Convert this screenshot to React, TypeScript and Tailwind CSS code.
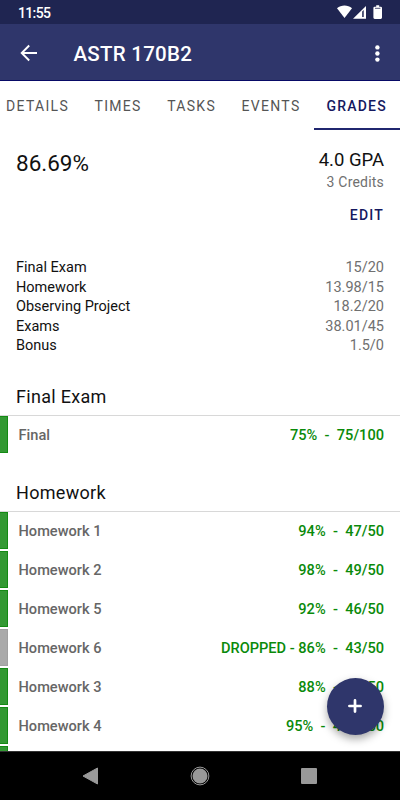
import clsx from "clsx"

type Grade = { name: string; percent: string; score: string; dropped?: boolean }

const tabs = ["DETAILS", "TIMES", "TASKS", "EVENTS"]

const summary = [
    ["Final Exam", "15/20"],
    ["Homework", "13.98/15"],
    ["Observing Project", "18.2/20"],
    ["Exams", "38.01/45"],
    ["Bonus", "1.5/0"],
]

const finals: Grade[] = [{ name: "Final", percent: "75%", score: "75/100" }]

const homework: Grade[] = [
    { name: "Homework 1", percent: "94%", score: "47/50" },
    { name: "Homework 2", percent: "98%", score: "49/50" },
    { name: "Homework 5", percent: "92%", score: "46/50" },
    { name: "Homework 6", percent: "86%", score: "43/50", dropped: true },
    { name: "Homework 3", percent: "88%", score: "44/50" },
    { name: "Homework 4", percent: "95%", score: "47.5/50" },
]

const StatusBar = () => (
    <div className="flex h-6 shrink-0 items-center justify-between bg-[#1f2551] pl-[18px] pr-[17px]">
        <span className="pt-[1px] text-[14px] font-medium leading-5 tracking-[-0.65px]">11:55</span>
        <svg width="47" height="24" viewBox="0 0 47 24" fill="white">
            <path d="M1 8.2C5.2 4.7 11.8 4.7 16 8.2L8.5 18Z" />
            <path fillRule="evenodd" d="M17 18.7L30 6v12.7ZM26.2 11.5v5.6h1.5v-7Z" />
            <path d="M38.7 6.7h1.5V5.3h3v1.4h1.5q1.3 0 1.3 1.3v9.6q0 1.3-1.3 1.3h-6q-1.3 0-1.3-1.3V8q0-1.3 1.3-1.3Z" />
            <path d="M39 8.3h5.4" stroke="#1f2551" strokeWidth=".8" />
        </svg>
    </div>
)

const Header = () => (
    <header className="flex h-[57px] shrink-0 items-center border-b border-[#080a66] bg-[#2f366b] pl-4 pr-[11px]">
        <svg width="24" height="24" viewBox="0 0 24 24" fill="none" stroke="white" strokeWidth="1.9" className="mt-[2px]">
            <path d="M21 12H6M13.2 4.5L5.7 12l7.5 7.5" />
        </svg>
        <h1 className="ml-[33.5px] grow pt-[4px] text-[20.5px] font-medium leading-6 tracking-[0.25px]">ASTR 170B2</h1>
        <svg width="24" height="24" viewBox="0 0 24 24" fill="white" className="mt-[1px]">
            <circle cx="12.4" cy="6.4" r="2.2" />
            <circle cx="12.4" cy="12.5" r="2.2" />
            <circle cx="12.4" cy="18.6" r="2.2" />
        </svg>
    </header>
)

const Tabs = () => (
    <nav className="flex h-[49px] shrink-0 text-[14px] leading-[51px] tracking-[1.3px] text-[#555]">
        <div className="flex gap-[25.5px] pl-[6px]">
            {tabs.map((tab) => (
                <span key={tab}>{tab}</span>
            ))}
        </div>
        <span className="ml-auto w-[86px] border-b-2 border-[#20266f] pl-[12.5px] font-medium tracking-[1.2px] text-[#15195f]">GRADES</span>
    </nav>
)

const Section = ({ title, grades }: { title: string; grades: Grade[] }) => (
    <section>
        <h2 className="h-[38px] border-b border-[#d8d8d8] pl-4 text-[18px] leading-[37px] tracking-[0.3px]">{title}</h2>
        {grades.map((g) => (
            <div key={g.name} className="mb-[2px] flex h-[37px] items-start pr-4 text-[14.6px] font-medium leading-5">
                <span
                    className={clsx(
                        "h-[37px] w-2 border-y border-r",
                        g.dropped ? "border-[#a0a0a0] bg-[#aaa]" : "border-[#148a14] bg-[#339933]"
                    )}
                />
                <span className="ml-[10.5px] grow pt-[9px] text-[#666]">{g.name}</span>
                <span className="whitespace-pre pt-[9px] text-[#0a8a0a]">
                    {g.dropped && "DROPPED - "}
                    {g.percent}{"  -  "}{g.score}
                </span>
            </div>
        ))}
    </section>
)

const AndroidNav = () => (
    <footer className="flex h-[49px] shrink-0 items-center justify-between border-t border-[#333] bg-black pl-[82px] pr-[83px]">
        <svg width="17" height="18" viewBox="0 0 17 18" fill="#999">
            <path d="M1 9L15.5 1v16Z" stroke="#999" strokeLinejoin="round" />
        </svg>
        <svg width="20" height="20" viewBox="0 0 20 20" fill="#999">
            <circle cx="10" cy="10" r="8.9" fill="none" stroke="#999" />
            <circle cx="10" cy="10" r="7.5" />
        </svg>
        <span className="h-4 w-4 rounded-[1px] bg-[#999]" />
    </footer>
)

export default function App() {
    return (
        <div className="relative flex h-[800px] w-[400px] flex-col overflow-hidden bg-white font-['Roboto',sans-serif] text-[#111]">
            <div className="text-white">
                <StatusBar />
                <Header />
            </div>
            <Tabs />
            <main className="min-h-0 grow overflow-hidden">
                <div className="flex h-[128px] justify-between pl-4 pr-4 pt-[19px]">
                    <span className="text-[22.5px] leading-7">86.69%</span>
                    <div className="text-right">
                        <div className="text-[18.5px] leading-[22px]">4.0 GPA</div>
                        <div className="text-[14px] leading-[23px] tracking-[0.2px] text-[#707070]">3 Credits</div>
                        <button className="mt-[10px] block w-full text-right text-[14px] font-medium leading-[22px] tracking-[1.2px] text-[#15195f]">EDIT</button>
                    </div>
                </div>
                <dl className="h-[120px] px-4 text-[14.5px] leading-[19.6px]">
                    {summary.map(([name, score]) => (
                        <div key={name} className="flex justify-between">
                            <dt>{name}</dt>
                            <dd className="text-[#707070]">{score}</dd>
                        </div>
                    ))}
                </dl>
                <Section title="Final Exam" grades={finals} />
                <div className="h-[19px]" />
                <Section title="Homework" grades={homework} />
                <div className="h-[37px] w-2 border-y border-r border-[#148a14] bg-[#339933]" />
            </main>
            <AndroidNav />
            <button className="absolute left-[326.5px] top-[677.5px] flex size-[57px] items-center justify-center rounded-full bg-[#2f366b] shadow-[0_4px_8px_rgba(0,0,0,0.35)]">
                <svg width="14" height="14" viewBox="0 0 14 14" stroke="white" strokeWidth="2.7" strokeLinecap="round">
                    <path d="M7 1.4v11.2M1.4 7h11.2" />
                </svg>
            </button>
        </div>
    )
}
